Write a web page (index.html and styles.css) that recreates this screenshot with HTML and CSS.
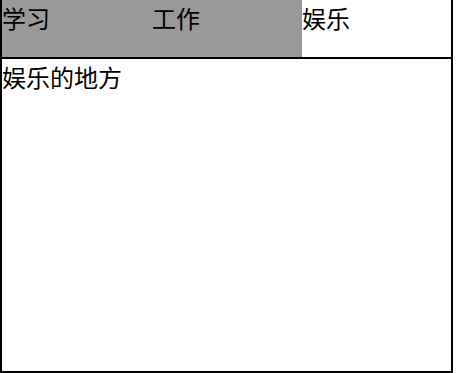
FILE: index.html
```html
<!DOCTYPE html>
<html lang="zh">
<head>
<meta charset="utf-8">
<title>Tabs</title>
<link rel="stylesheet" href="styles.css">
</head>
<body>
<div class="box">
  <ul class="tabs">
    <li class="tab">学习</li>
    <li class="tab">工作</li>
    <li class="tab tab-active">娱乐</li>
  </ul>
  <div class="panel">娱乐的地方</div>
</div>
</body>
</html>
```
FILE: styles.css
```css
html, body {
  margin: 0;
  padding: 0;
  background: #fff;
}
body {
  font-family: "Noto Sans CJK SC", "Noto Sans", sans-serif;
  font-size: 24px;
  line-height: normal;
  color: #000;
}
.box {
  width: 449px;
  border: 2px solid #000;
  border-top: none;
}
.tabs {
  display: flex;
  margin: 0;
  padding: 0;
  list-style: none;
  height: 57px;
}
.tab {
  width: 150px;
  flex: none;
  background: #999;
}
.tab-active {
  background: #fff;
  flex: 1;
}
.panel {
  border-top: 2px solid #000;
  height: 312px;
}
```
